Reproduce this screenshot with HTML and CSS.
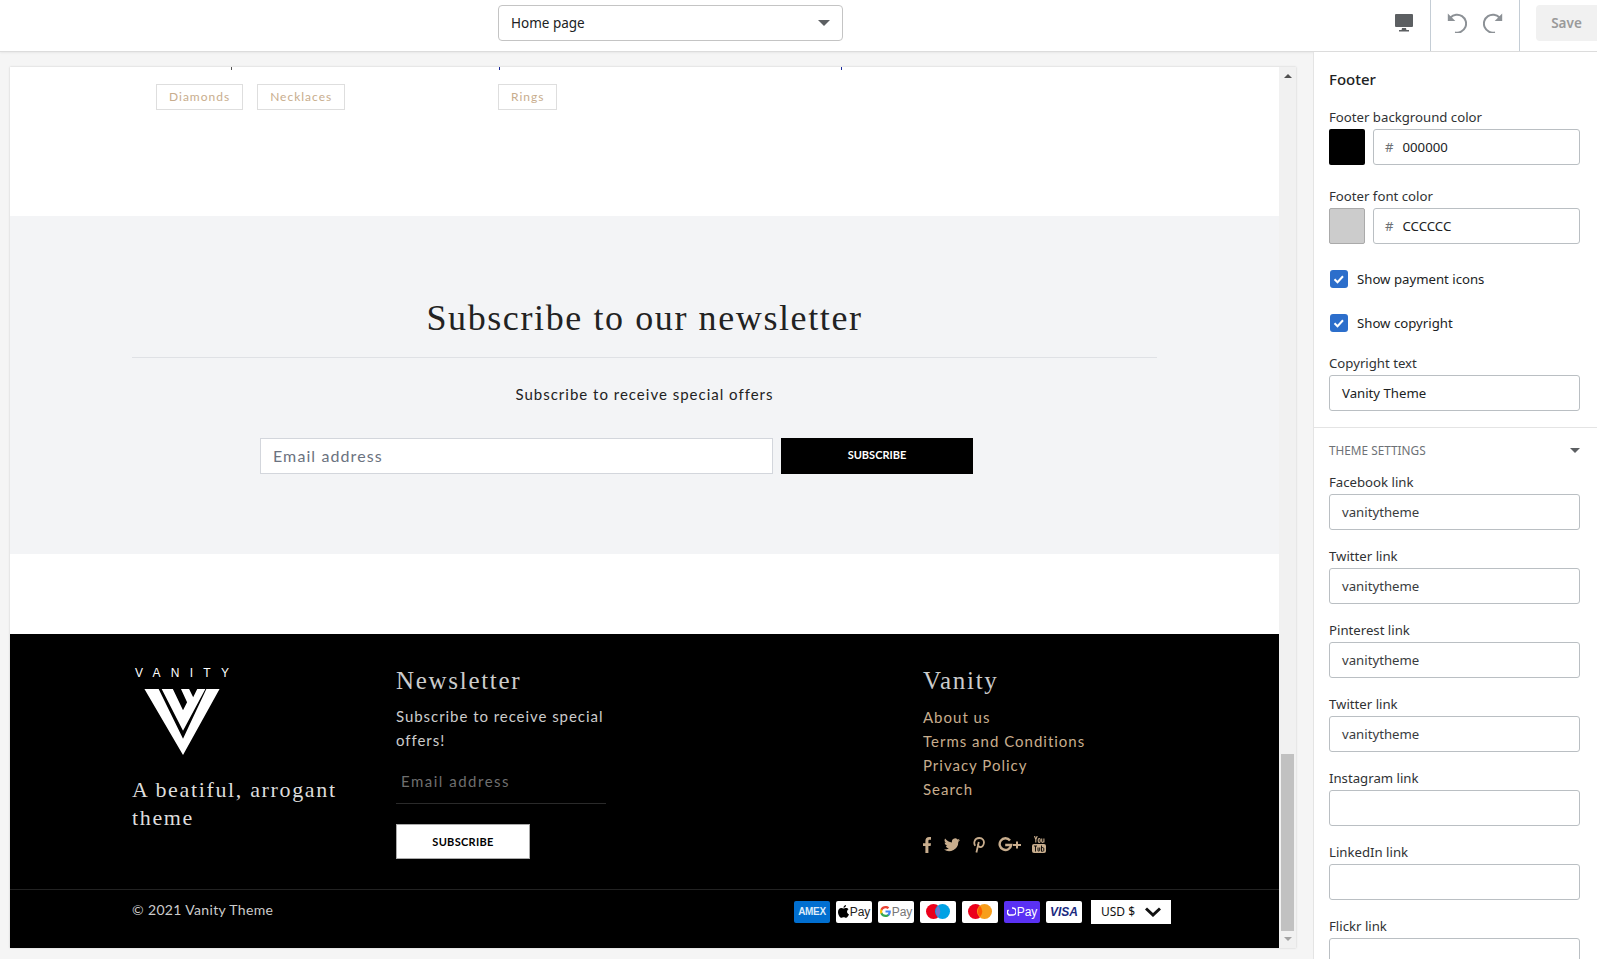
FILE: index.html
```html
<!DOCTYPE html>
<html>

<head>
  <meta charset="utf-8">
  <title>Theme editor</title>
  <link rel="stylesheet" href="styles.css">
</head>

<body>
  <header class="topbar">
    <div class="page-select">
      <span>Home page</span>
      <span class="caret"></span>
    </div>
    <div class="tools">
      <svg class="monitor" width="18" height="18" viewBox="0 0 18 18">
        <path fill="#5c5f62" d="M1 0h16a1 1 0 0 1 1 1v11a1 1 0 0 1-1 1H1a1 1 0 0 1-1-1V1a1 1 0 0 1 1-1z" />
        <path fill="#5c5f62" d="M7 14h4l.4 2H14v1.500H4V16h2.600z" />
      </svg>
      <div class="history">
        <svg width="20" height="20" viewBox="0 0 20 20" fill="none" stroke="#8c9196" stroke-width="2">
          <path d="M3.500 4.500A9 9 0 1 1 8 19.400" />
          <path fill="#8c9196" stroke="none" d="M.8.500V8h7.500z" />
        </svg>
        <svg width="20" height="20" viewBox="0 0 20 20" fill="none" stroke="#8c9196" stroke-width="2">
          <path d="M16.500 4.500A9 9 0 1 0 12 19.400" />
          <path fill="#8c9196" stroke="none" d="M19.200.500V8h-7.500z" />
        </svg>
      </div>
      <div class="save-wrap">
        <div class="save">Save</div>
      </div>
    </div>
  </header>

  <div class="workspace">
    <div class="preview">
      <div class="frame">
        <main class="page">
          <section class="collections">
            <div class="ticks">
              <i class="tick tick-a"></i>
              <i class="tick tick-b"></i>
              <i class="tick tick-c"></i>
            </div>
            <div class="tags">
              <div class="tag-group">
                <span class="tag">Diamonds</span>
                <span class="tag">Necklaces</span>
              </div>
              <div class="tag-group">
                <span class="tag">Rings</span>
              </div>
            </div>
          </section>

          <section class="newsletter">
            <h2>Subscribe to our newsletter</h2>
            <p>Subscribe to receive special offers</p>
            <div class="signup">
              <div class="signup-input">Email address</div>
              <div class="signup-btn">SUBSCRIBE</div>
            </div>
          </section>

          <footer class="site-footer">
            <div class="footer-main">
              <div class="brand">
                <div class="logo">
                  <div class="logo-word">VANITY</div>
                  <svg width="76" height="67" viewBox="0 0 74 66">
                    <path fill="#fff" d="M0 1h14l24 49L61 1h13L38 66z" />
                    <path fill="#fff" d="M17 1h11l10 21 4-8-6-13h8l4 8 4-8h8L38 42z" />
                  </svg>
                </div>
                <p class="tagline">A beatiful, arrogant theme</p>
              </div>

              <div class="foot-news">
                <h3>Newsletter</h3>
                <p>Subscribe to receive special offers!</p>
                <div class="foot-input">Email address</div>
                <div class="foot-btn">SUBSCRIBE</div>
              </div>

              <div class="foot-links">
                <h3>Vanity</h3>
                <ul>
                  <li>About us</li>
                  <li>Terms and Conditions</li>
                  <li>Privacy Policy</li>
                  <li>Search</li>
                </ul>
                <div class="social">
                  <svg width="8" height="16" viewBox="0 0 8 16">
                    <path fill="#c8ad8d" d="M2.400 16V9H0V6.200h2.400V4C2.400 1.500 3.800 0 6.200 0H8v2.800H6.700c-1 0-1.300.5-1.300 1.300v2.100H8L7.600 9H5.400v7z" />
                  </svg>
                  <svg width="16" height="14" viewBox="0 0 16 14">
                    <path fill="#c8ad8d" d="M16 2a6 6 0 0 1-1.900.5A3.200 3.200 0 0 0 15.500.700a6.500 6.500 0 0 1-2 .8A3.200 3.200 0 0 0 8 4.400 9.200 9.200 0 0 1 1.100.600a3.300 3.300 0 0 0 1 4.400A3.200 3.200 0 0 1 .7 4.600c0 1.600 1.100 2.900 2.600 3.200a3.200 3.200 0 0 1-1.500.1 3.200 3.200 0 0 0 3 2.300A6.500 6.500 0 0 1 0 11.500 9.200 9.200 0 0 0 14.300 3.700 6.500 6.500 0 0 0 16 2z" />
                  </svg>
                  <svg width="12" height="16" viewBox="0 0 12 16">
                    <path fill="none" stroke="#c8ad8d" stroke-width="1.800" d="M2.300 8.800C.4 6.500 1.200 1 6.200 1c3.800 0 5 2.800 4.700 5-.3 2.500-2 4.300-3.900 4-1.500-.2-2.100-1.300-1.900-2.500M5.800 5L3.400 15.500" />
                  </svg>
                  <svg class="gplus" width="23" height="15" viewBox="0 0 23 15">
                    <path fill="none" stroke="#c8ad8d" stroke-width="2.400" d="M12 3.500A5.800 5.800 0 1 0 13.200 8H7.200" />
                    <path fill="#c8ad8d" d="M18 4.500h2v2.500h3v2h-3v2.500h-2V9h-3V7h3z" />
                  </svg>
                  <svg width="14" height="17" viewBox="0 0 14 17">
                    <path fill="#c8ad8d" d="M2 8h10a2 2 0 0 1 2 2v5a2 2 0 0 1-2 2H2a2 2 0 0 1-2-2v-5a2 2 0 0 1 2-2z" />
                    <path fill="none" stroke="#000" stroke-width=".9" d="M2 10h3M3.500 10v5.500M6 11.500v3c0 .8 1 .8 1.700 0v-3M9.500 9.500v6M9.500 12c1.500-1 2.300-.4 2.300 1v1.300c0 1-1 1.300-2.300.6" />
                    <path fill="none" stroke="#c8ad8d" stroke-width="1.100" d="M2.500 0l1.300 3.500V6.500M5.200 0L3.800 3.500M7.200 2.500c-1 0-1 .5-1 1.500v1c0 1 0 1.500 1 1.500s1-.5 1-1.500V4c0-1 0-1.500-1-1.500zM9.700 2.500v3c0 1.200 1.300 1.200 2.200 0v-3M11.900 2.500v4" />
                  </svg>
                </div>
              </div>
            </div>

            <div class="footer-bottom">
              <div class="copyright">© 2021 Vanity Theme</div>
              <div class="payments">
                <div class="pay pay-amex"><span>AMEX</span></div>
                <div class="pay">
                  <svg width="11" height="13" viewBox="0 0 11 13">
                    <path fill="#000" d="M8 0c.1 1.400-1 2.800-2.500 2.800C5.300 1.400 6.700.1 8 0zM5.600 3.400c.6 0 1.300-.5 2.400-.5 1 0 2 .5 2.500 1.300-2.100 1.300-1.800 4.200.5 5.100-.6 1.500-1.700 3.500-3 3.500-.9 0-1.200-.6-2.300-.6s-1.500.6-2.300.6C1.800 12.800 0 9.600 0 7c0-2.600 1.700-4 3.200-4 1 0 1.800.4 2.400.4z" />
                  </svg>
                  <span class="pay-word">Pay</span>
                </div>
                <div class="pay">
                  <svg width="11" height="11" viewBox="0 0 12 12">
                    <path fill="#4285f4" d="M11.800 6.100c0-.4 0-.8-.1-1.200H6v2.300h3.300c-.1.800-.6 1.400-1.200 1.800v1.500h2c1.100-1.100 1.700-2.600 1.700-4.400z" />
                    <path fill="#34a853" d="M6 12c1.600 0 3-.5 4.100-1.500l-2-1.500c-.6.400-1.300.6-2.100.6-1.600 0-2.900-1-3.400-2.500H.6v1.600C1.600 10.700 3.600 12 6 12z" />
                    <path fill="#fbbc04" d="M2.600 7.100C2.300 6.400 2.300 5.600 2.600 4.900V3.300H.6c-.8 1.700-.8 3.700 0 5.400z" />
                    <path fill="#ea4335" d="M6 2.400c.9 0 1.700.3 2.300.9l1.800-1.800C9 .5 7.600 0 6 0 3.600 0 1.600 1.300.6 3.300l2 1.600C3.100 3.400 4.400 2.400 6 2.400z" />
                  </svg>
                  <span class="pay-word pay-grey">Pay</span>
                </div>
                <div class="pay">
                  <svg width="24" height="15" viewBox="0 0 24 15">
                    <circle cx="7.500" cy="7.500" r="7.500" fill="#eb001b" />
                    <circle cx="16.500" cy="7.500" r="7.500" fill="#00a2e5" />
                    <path fill="#7375cf" d="M12 2.100a7.500 7.500 0 0 1 0 10.800 7.500 7.500 0 0 1 0-10.800z" />
                  </svg>
                </div>
                <div class="pay">
                  <svg width="24" height="15" viewBox="0 0 24 15">
                    <circle cx="7.500" cy="7.500" r="7.500" fill="#eb001b" />
                    <circle cx="16.500" cy="7.500" r="7.500" fill="#f79e1b" />
                    <path fill="#ff5f00" d="M12 2.100a7.500 7.500 0 0 1 0 10.800 7.500 7.500 0 0 1 0-10.800z" />
                  </svg>
                </div>
                <div class="pay pay-shop">
                  <svg width="9" height="9" viewBox="0 0 9 9">
                    <path fill="none" stroke="#fff" stroke-width="1.500" d="M5 .9h.5a3.600 3.600 0 0 1 0 7.200h-2A2.800 2.800 0 0 1 1.600 3" />
                  </svg>
                  <span class="pay-word">Pay</span>
                </div>
                <div class="pay pay-visa"><span>VISA</span></div>
              </div>
              <div class="currency">
                <span>USD $</span>
                <svg width="16" height="10" viewBox="0 0 16 10">
                  <path fill="none" stroke="#111" stroke-width="3" d="M1 1.500l7 6.500 7-6.500" />
                </svg>
              </div>
            </div>
          </footer>
        </main>

        <div class="scrollbar">
          <div class="arrow-up"></div>
          <div class="track"></div>
          <div class="thumb"></div>
          <div class="arrow-down"></div>
        </div>
      </div>
    </div>

    <aside class="panel">
      <div class="panel-top">
        <h1>Footer</h1>
        <label class="lbl lbl-first">Footer background color</label>
        <div class="color-row">
          <div class="swatch swatch-black"></div>
          <div class="field hex"><span class="hash">#</span>000000</div>
        </div>
        <label class="lbl">Footer font color</label>
        <div class="color-row">
          <div class="swatch swatch-grey"></div>
          <div class="field hex"><span class="hash">#</span>CCCCCC</div>
        </div>
        <div class="check check-first">
          <svg width="18" height="18" viewBox="0 0 18 18">
            <rect width="18" height="18" rx="3" fill="#2c6ecb" />
            <path fill="none" stroke="#fff" stroke-width="2" d="M4.500 9.200l3 3 5.500-6" />
          </svg>
          <span>Show payment icons</span>
        </div>
        <div class="check">
          <svg width="18" height="18" viewBox="0 0 18 18">
            <rect width="18" height="18" rx="3" fill="#2c6ecb" />
            <path fill="none" stroke="#fff" stroke-width="2" d="M4.500 9.200l3 3 5.500-6" />
          </svg>
          <span>Show copyright</span>
        </div>
        <label class="lbl lbl-copy">Copyright text</label>
        <div class="field">Vanity Theme</div>
      </div>

      <div class="panel-links">
        <div class="theme-head">
          <span>THEME SETTINGS</span>
          <span class="caret caret-small"></span>
        </div>
        <label class="lbl">Facebook link</label>
        <div class="field">vanitytheme</div>
        <label class="lbl">Twitter link</label>
        <div class="field">vanitytheme</div>
        <label class="lbl">Pinterest link</label>
        <div class="field">vanitytheme</div>
        <label class="lbl">Twitter link</label>
        <div class="field">vanitytheme</div>
        <label class="lbl">Instagram link</label>
        <div class="field"></div>
        <label class="lbl">LinkedIn link</label>
        <div class="field"></div>
        <label class="lbl">Flickr link</label>
        <div class="field"></div>
      </div>
    </aside>
  </div>
</body>

</html>
```

FILE: styles.css
```css
* {
  box-sizing: border-box;
}

html,
body {
  height: 959px;
  margin: 0;
  overflow: hidden;
}

body {
  display: flex;
  flex-direction: column;
  background-color: #f5f5f5;
  font-family: "Noto Sans", sans-serif;
  color: #202223;
}

h1,
h2,
h3,
p,
ul {
  margin: 0;
  padding: 0;
  font-weight: normal;
}

/* top bar */

.topbar {
  display: flex;
  flex: none;
  height: 52px;
  padding-left: 498px;
  background-color: #fff;
  border-bottom: 1px solid #dcdcdc;
  box-shadow: 0 1px 2px rgba(0, 0, 0, 0.06);
}

.page-select {
  display: flex;
  align-items: center;
  justify-content: space-between;
  width: 345px;
  height: 36px;
  margin-top: 5px;
  padding: 0 12px;
  border: 1px solid #c4c4c4;
  border-radius: 4px;
  font-size: 13.5px;
}

.caret {
  width: 0;
  height: 0;
  border-left: 6px solid transparent;
  border-right: 6px solid transparent;
  border-top: 6px solid #5c5f62;
}

.caret-small {
  border-left-width: 5px;
  border-right-width: 5px;
  border-top-width: 5px;
}

.tools {
  display: flex;
  margin-left: auto;
  height: 51px;
}

.monitor {
  margin: 14px 17px 0 0;
}

.history {
  display: flex;
  gap: 16px;
  width: 90px;
  padding: 13px 0 0 16px;
  border-left: 1px solid #c4cdd5;
  border-right: 1px solid #c4cdd5;
}

.save-wrap {
  padding: 5px 0 0 16px;
}

.save {
  display: flex;
  align-items: center;
  justify-content: center;
  width: 61px;
  height: 36px;
  background-color: #f1f1f1;
  border-radius: 4px 0 0 4px;
  color: #9a9a9a;
  font-size: 13.5px;
  font-weight: 600;
}

/* preview */

.workspace {
  display: flex;
  flex: 1;
  min-height: 0;
}

.preview {
  flex: 1;
  padding: 15px 17px 11px 10px;
}

.frame {
  display: flex;
  height: 881px;
  overflow: hidden;
  box-shadow: 0 0 2px rgba(0, 0, 0, 0.18);
}

.page {
  display: flex;
  flex: 1;
  flex-direction: column;
  background-color: #fff;
  font-family: Lato, sans-serif;
}

.scrollbar {
  display: flex;
  flex: none;
  flex-direction: column;
  align-items: center;
  width: 17px;
  background-color: #f1f1f1;
}

.arrow-up {
  width: 0;
  height: 0;
  margin-top: 7px;
  border-left: 4px solid transparent;
  border-right: 4px solid transparent;
  border-bottom: 4px solid #505050;
}

.track {
  flex: 1;
}

.thumb {
  width: 13px;
  height: 177px;
  margin-left: -1px;
  background-color: #c1c1c1;
}

.arrow-down {
  width: 0;
  height: 0;
  margin: 6px 0 7px;
  border-left: 4px solid transparent;
  border-right: 4px solid transparent;
  border-top: 4px solid #a3a3a3;
}

/* tags */

.collections {
  flex: none;
  height: 149px;
}

.ticks {
  display: flex;
  height: 3px;
  padding-left: 221px;
}

.tick {
  width: 1px;
  height: 3px;
}

.tick-a {
  background-color: #555;
}

.tick-b {
  margin-left: 267px;
  background-color: #1a2a9a;
}

.tick-c {
  margin-left: 341px;
  background-color: #1a2a9a;
}

.tags {
  display: flex;
  margin-top: 14px;
  padding-left: 146px;
}

.tag-group {
  display: flex;
  gap: 14px;
  width: 342px;
}

.tag {
  height: 26px;
  padding: 0 12px;
  border: 1px solid #dedede;
  color: #c8ad8d;
  font-size: 12px;
  line-height: 24px;
  letter-spacing: 1px;
}

/* newsletter band */

.newsletter {
  display: flex;
  flex: none;
  flex-direction: column;
  align-items: center;
  height: 338px;
  padding-top: 80px;
  background-color: #f3f4f6;
}

.newsletter h2 {
  width: 1025px;
  height: 62px;
  border-bottom: 1px solid #dfe1e5;
  color: #222;
  font-family: "Liberation Serif", serif;
  font-size: 36px;
  line-height: 44px;
  letter-spacing: 1.6px;
  text-align: center;
}

.newsletter p {
  margin-top: 25px;
  color: #222;
  font-size: 15px;
  line-height: 22px;
  letter-spacing: 1px;
}

.signup {
  display: flex;
  align-self: flex-start;
  gap: 8px;
  margin-top: 33px;
  margin-left: 250px;
}

.signup-input {
  width: 513px;
  height: 36px;
  padding-left: 12px;
  background-color: #fff;
  border: 1px solid #d3d6dc;
  color: #6b7280;
  font-size: 16px;
  line-height: 34px;
  letter-spacing: 1.1px;
}

.signup-btn {
  width: 192px;
  height: 36px;
  background-color: #000;
  color: #fff;
  font-size: 11px;
  font-weight: 700;
  line-height: 34px;
  text-align: center;
}

/* footer */

.site-footer {
  display: flex;
  flex: 1;
  flex-direction: column;
  margin-top: 80px;
  background-color: #000;
}

.footer-main {
  display: grid;
  grid-template-columns: 263px 528px 1fr;
  height: 256px;
  padding-left: 122px;
  border-bottom: 1px solid #222;
}

.logo {
  display: flex;
  flex-direction: column;
  width: 110px;
  margin: 35px 0 0 3px;
}

.logo-word {
  color: #fff;
  font-family: "Liberation Sans", sans-serif;
  font-size: 12px;
  line-height: 9px;
  letter-spacing: 10.3px;
  margin-bottom: 10px;
  white-space: nowrap;
}

.logo svg {
  margin-left: 9px;
}

.tagline {
  width: 230px;
  margin-top: 21px;
  color: #ddd;
  font-family: "Liberation Serif", serif;
  font-size: 22px;
  line-height: 28px;
  letter-spacing: 1.65px;
}

.site-footer h3 {
  margin-top: 32px;
  color: #ccc;
  font-family: "Liberation Serif", serif;
  font-size: 25px;
  line-height: 30px;
  letter-spacing: 1.7px;
}

.foot-news {
  width: 210px;
  margin-left: 1px;
}

.foot-news p {
  margin-top: 8px;
  color: #ccc;
  font-size: 15px;
  line-height: 24px;
  letter-spacing: 0.95px;
}

.foot-input {
  height: 40px;
  margin-top: 12px;
  padding: 6px 0 0 5px;
  border-bottom: 1px solid #2a2a2a;
  color: #6f6f6f;
  font-size: 15px;
  line-height: 22px;
  letter-spacing: 1.5px;
}

.foot-btn {
  width: 134px;
  height: 35px;
  margin-top: 20px;
  background-color: #fff;
  border: 1px solid #aaa;
  color: #000;
  font-size: 11px;
  font-weight: 700;
  line-height: 33px;
  text-align: center;
  letter-spacing: 0.3px;
}

.foot-links ul {
  margin-top: 9px;
  list-style: none;
  color: #c8ad8d;
  font-size: 15px;
  line-height: 24px;
  letter-spacing: 1px;
}

.social {
  display: flex;
  align-items: center;
  margin-top: 35px;
  height: 17px;
}

.social svg {
  margin-right: 13px;
}

.social .gplus {
  margin-right: 11px;
}

.footer-bottom {
  display: flex;
  align-items: center;
  flex: 1;
  padding: 0 0 15px 122px;
}

.copyright {
  width: 662px;
  margin-bottom: 4px;
  color: #ccc;
  font-size: 14px;
  letter-spacing: 0.35px;
}

.payments {
  display: flex;
  gap: 6px;
}

.pay {
  display: flex;
  align-items: center;
  justify-content: center;
  gap: 1px;
  width: 36px;
  height: 22px;
  background-color: #fff;
  border-radius: 2px;
  font-family: "Liberation Sans", sans-serif;
}

.pay-word {
  color: #222;
  font-size: 12px;
}

.pay-grey {
  color: #777;
}

.pay-amex {
  background-color: #016fd0;
  color: #dcebfa;
  font-size: 10px;
  font-weight: 700;
  letter-spacing: -0.3px;
}

.pay-shop {
  background-color: #5a31f4;
}

.pay-shop .pay-word {
  color: #fff;
}

.pay-visa {
  color: #1a2a80;
  font-size: 12px;
  font-weight: 700;
  font-style: italic;
}

.currency {
  display: flex;
  align-items: center;
  justify-content: space-between;
  width: 82px;
  height: 26px;
  margin-left: 8px;
  padding: 0 10px;
  background-color: #fff;
  border: 1px solid #000;
  color: #111;
  font-family: "Noto Sans", sans-serif;
  font-size: 12px;
}

/* settings panel */

.panel {
  flex: none;
  width: 284px;
  overflow: hidden;
  background-color: #fff;
  border-left: 1px solid #e4e4e4;
  font-size: 13.2px;
}

.panel-top {
  height: 376px;
  padding: 16px 17px 0 15px;
  border-bottom: 1px solid #e4e4e4;
}

.panel h1 {
  font-size: 15px;
  font-weight: 500;
  line-height: 22px;
}

.lbl {
  display: block;
  height: 20px;
  font-size: 13.2px;
  line-height: 20px;
  color: #303234;
}

.lbl-first {
  margin-top: 17px;
  margin-bottom: 2px;
}

.color-row {
  display: flex;
  gap: 8px;
  margin-bottom: 21px;
}

.color-row + .lbl {
  margin-bottom: 2px;
}

.swatch {
  flex: none;
  width: 36px;
  height: 36px;
  border-radius: 2px;
}

.swatch-black {
  background-color: #000;
}

.swatch-grey {
  background-color: #ccc;
  border: 1px solid #aaa;
}

.field {
  height: 36px;
  padding-left: 12px;
  border: 1px solid #babfc3;
  border-radius: 3px;
  line-height: 34px;
}

.hex {
  flex: 1;
  padding-left: 11px;
}

.hash {
  margin-right: 9px;
  color: #6d7175;
}

.check {
  display: flex;
  align-items: center;
  gap: 9px;
  height: 18px;
  margin: 26px 0 0 1px;
}

.check-first {
  margin-top: 26px;
}

.lbl-copy {
  margin-top: 21px;
  margin-bottom: 2px;
}

.panel-links {
  padding: 0 17px 0 15px;
}

.theme-head {
  display: flex;
  align-items: center;
  justify-content: space-between;
  height: 20px;
  margin: 12px 0;
  color: #6d7175;
  font-size: 11.8px;
}

.panel-links .field {
  margin: 2px 0 16px;
  color: #3a3c3e;
}
```
